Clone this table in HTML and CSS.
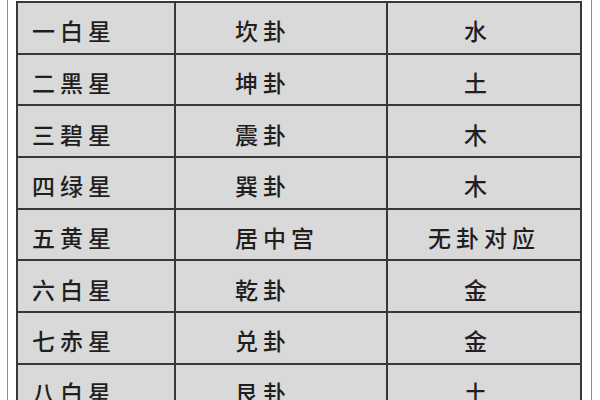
FILE: index.html
```html
<!DOCTYPE html>
<html lang="zh-CN">
<head>
<meta charset="utf-8">
<title>九星</title>
<link rel="stylesheet" href="styles.css">
</head>
<body>
<div class="frame">
  <div class="table">
    <div class="cell c1">一白星</div><div class="cell c2">坎卦</div><div class="cell c3 solo">水</div>
    <div class="cell c1">二黑星</div><div class="cell c2">坤卦</div><div class="cell c3 solo">土</div>
    <div class="cell c1">三碧星</div><div class="cell c2">震卦</div><div class="cell c3 solo">木</div>
    <div class="cell c1">四绿星</div><div class="cell c2">巽卦</div><div class="cell c3 solo">木</div>
    <div class="cell c1">五黄星</div><div class="cell c2">居中宫</div><div class="cell c3">无卦对应</div>
    <div class="cell c1">六白星</div><div class="cell c2">乾卦</div><div class="cell c3 solo">金</div>
    <div class="cell c1">七赤星</div><div class="cell c2">兑卦</div><div class="cell c3 solo">金</div>
    <div class="cell c1">八白星</div><div class="cell c2">艮卦</div><div class="cell c3 solo">土</div>
  </div>
</div>
</body>
</html>
```
FILE: styles.css
```css
html, body {
  margin: 0;
  padding: 0;
  background: #ffffff;
  overflow: hidden;
  height: 400px;
}
.frame {
  margin-left: 7px;
  width: 585px;
  min-height: 400px;
  border-left: 1px solid #8c8c8c;
  border-right: 1px solid #8c8c8c;
  padding: 1px 9px 0 8px;
  box-sizing: border-box;
}
.table {
  width: 566px;
  display: grid;
  grid-template-columns: 156px 210px 192px;
  grid-auto-rows: 49.7px;
  gap: 2px;
  padding: 2px;
  box-sizing: border-box;
  background: #383838;
}
.cell {
  background: #d9d9d9;
  display: flex;
  align-items: center;
  padding-top: 5px;
  box-sizing: border-box;
  font-family: "Noto Sans CJK SC", "Noto Sans", sans-serif;
  font-size: 23px;
  font-weight: 500;
  letter-spacing: 5px;
  color: #1f1f1f;
  white-space: nowrap;
}
.c1 {
  padding-left: 14px;
}
.c2 {
  padding-left: 59px;
}
.c3 {
  justify-content: center;
}
.c3.solo {
  padding-right: 12px;
}
```
